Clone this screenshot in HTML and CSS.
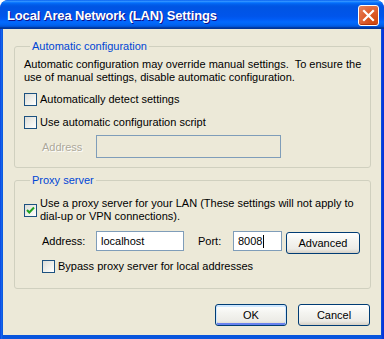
FILE: index.html
```html
<!DOCTYPE html>
<html>
<head>
<meta charset="utf-8">
<link rel="stylesheet" href="styles.css">
</head>
<body>
<div class="window">
  <div class="titlebar">
    <span class="title">Local Area Network (LAN) Settings</span>
    <button class="close" aria-label="Close">
      <svg width="13" height="13" viewBox="0 0 13 13"><path d="M2 2 L11 11 M11 2 L2 11" stroke="#fff" stroke-width="2.2" stroke-linecap="square"/></svg>
    </button>
  </div>
  <div class="client">
    <fieldset class="group group-auto">
      <legend>Automatic configuration</legend>
      <p class="desc">Automatic configuration may override manual settings.&nbsp; To ensure the use of manual settings, disable automatic configuration.</p>
      <label class="check row-first"><span class="box"></span><span>Automatically detect settings</span></label>
      <label class="check row-second"><span class="box"></span><span>Use automatic configuration script</span></label>
      <div class="field-row disabled-row">
        <span class="field-label disabled">Address</span>
        <span class="input input-disabled"></span>
      </div>
    </fieldset>
    <fieldset class="group group-proxy">
      <legend>Proxy server</legend>
      <label class="check check-multi"><span class="box checked"><svg width="11" height="11" viewBox="0 0 11 11"><path d="M2 5 L4.3 7.5 L9 2.5" fill="none" stroke="#21A121" stroke-width="2"/></svg></span><span>Use a proxy server for your LAN (These settings will not apply to dial-up or VPN connections).</span></label>
      <div class="field-row proxy-row">
        <span class="field-label addr-label">Address:</span>
        <span class="input input-addr">localhost</span>
        <span class="field-label port-label">Port:</span>
        <span class="input input-port">8008<span class="caret"></span></span>
        <button class="btn btn-adv">Advanced</button>
      </div>
      <label class="check check-bypass"><span class="box"></span><span>Bypass proxy server for local addresses</span></label>
    </fieldset>
    <div class="buttons">
      <button class="btn btn-default">OK</button>
      <button class="btn">Cancel</button>
    </div>
  </div>
</div>
</body>
</html>
```

FILE: styles.css
```css
html, body {
  margin: 0;
  padding: 0;
  background: #ffffff;
}
.window {
  width: 384px;
  height: 339px;
  display: flex;
  flex-direction: column;
  background: linear-gradient(to right, #0831D9 0px, #166AEE 1px, #0855DD 3px, #0855DD 381px, #0831D9 383px);
  border-radius: 8px 8px 0 0;
  box-sizing: border-box;
  font-family: "Liberation Sans", Arial, sans-serif;
  font-size: 11px;
  color: #000;
  overflow: hidden;
}
.titlebar {
  height: 29px;
  flex: none;
  display: flex;
  align-items: center;
  justify-content: space-between;
  padding: 0 5px 0 7px;
  border-radius: 8px 8px 0 0;
  background: linear-gradient(to bottom, #0058EE 0%, #3593FF 4%, #288EFF 6%, #127DFF 8%, #036FFC 10%, #0262EE 14%, #0057E5 20%, #0054E3 24%, #0055EB 56%, #005BF5 66%, #026AFE 76%, #0062EF 86%, #0052D6 92%, #0040AB 94%, #003092 100%);
}
.title {
  color: #fff;
  font-weight: bold;
  font-size: 13px;
  letter-spacing: -0.15px;
  text-shadow: 1px 1px #0F1089;
  margin-top: 1px;
}
.close {
  width: 21px;
  height: 21px;
  margin-top: 2px;
  padding: 0;
  border: 1px solid #fff;
  border-radius: 3px;
  background: radial-gradient(circle at 80% 85%, #D0480E 0%, #DD5B2A 45%, #E7805A 95%);
  display: flex;
  align-items: center;
  justify-content: center;
  box-shadow: inset 0 -1px 1px #B0340A;
}
.client {
  flex: 1;
  margin: 0 3px 4px 3px;
  background: #ECE9D8;
  padding: 11px 10px 0 11px;
}
.group {
  margin: 0;
  padding: 5px 8px 9px 9px;
  border: 1px solid #D0D0BF;
  border-radius: 3px;
}
.group legend {
  color: #0046D5;
  padding: 0 2px;
  margin-left: 6px;
  line-height: 13px;
}
.group-proxy {
  margin-top: 6px;
  padding: 10px 8px 15px 9px;
}
.desc {
  margin: 0;
  line-height: 13px;
}
.check {
  display: flex;
  align-items: center;
  line-height: 13px;
}
.box {
  width: 13px;
  height: 13px;
  box-sizing: border-box;
  border: 1px solid #1C5180;
  background: linear-gradient(135deg, #DCDCD7 0%, #F2F2EE 60%, #ffffff 100%);
  margin-right: 3px;
  flex: none;
  display: flex;
  align-items: center;
  justify-content: center;
}
.row-first { margin-top: 9px; }
.row-second { margin-top: 10px; }
.field-row {
  display: flex;
  align-items: center;
}
.disabled-row { margin-top: 6px; }
.field-label {
  padding-left: 18px;
  width: 72px;
  box-sizing: border-box;
  flex: none;
}
.disabled {
  color: #ACA899;
  text-shadow: 1px 1px #fff;
}
.input {
  box-sizing: border-box;
  border: 1px solid #7F9DB9;
  background: #fff;
  display: flex;
  align-items: center;
  padding-left: 4px;
  font-size: 11px;
  flex: none;
}
.input-disabled {
  width: 185px;
  height: 23px;
  background: #ECE9D8;
}
.proxy-row {
  margin-top: 8px;
  align-items: flex-start;
}
.proxy-row .field-label { line-height: 20px; }
.input-addr {
  width: 88px;
  height: 20px;
}
.proxy-row .port-label {
  padding-left: 14px;
  width: 49px;
}
.input-port {
  width: 49px;
  height: 20px;
}
.caret {
  display: inline-block;
  width: 1px;
  height: 13px;
  background: #000;
  margin-left: 1px;
}
.btn {
  box-sizing: border-box;
  height: 22px;
  border: 1px solid #003C74;
  border-radius: 3px;
  background: linear-gradient(to bottom, #ffffff 0%, #F4F4F0 40%, #ECEBE6 80%, #D6D0C5 100%);
  font-family: "Liberation Sans", Arial, sans-serif;
  font-size: 11px;
  color: #000;
  padding: 0;
}
.btn-adv {
  width: 74px;
  margin-left: 4px;
  margin-top: 1px;
}
.check-bypass {
  margin-top: 6px;
  margin-left: 18px;
}
.buttons {
  display: flex;
  justify-content: flex-end;
  gap: 11px;
  margin-top: 15px;
  padding-right: 1px;
}
.buttons .btn {
  width: 72px;
}
.btn-default {
  box-shadow: inset 0 1px 0 1px #CEE7FF, inset 0 -1px 0 1px #6982EE;
}
```
